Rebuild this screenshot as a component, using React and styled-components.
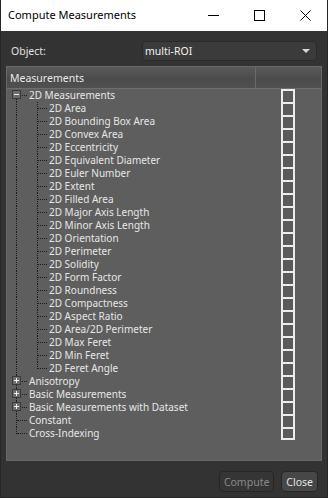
import React from 'react';
import styled, { createGlobalStyle } from 'styled-components';

const GlobalStyle = createGlobalStyle`
    html, body { margin: 0; padding: 0; background: #323232; }
    body { font-family: "Noto Sans", "Open Sans", sans-serif; }
`

const Window = styled.div`
    width: 328px; height: 498px;
    box-sizing: border-box;
    display: flex; flex-direction: column;
    background: #333333;
    border: 1px solid #262626;
    border-top: none;
    overflow: hidden;
`
const TitleBar = styled.div`
    height: 31px;
    flex: none;
    display: flex; align-items: center;
    background: #fff;
    margin: 0 -1px;
    padding-left: 8px;
`
const Title = styled.div`
    flex: 1;
    font-size: 11px;
    color: #000;
    padding-bottom: 2px;
`
const CaptionBtn = styled.div`
    width: 46px; height: 31px;
    display: flex; align-items: center; justify-content: center;
`
const Body = styled.div`
    flex: 1;
    display: flex; flex-direction: column;
    padding: 10px 5px 5px 5px;
`
const FieldRow = styled.div`
    display: flex; align-items: center;
    height: 20px;
    padding-left: 5px;
`
const Label = styled.div`
    width: 131px;
    font-size: 10.5px;
    color: #e0e0e0;
`
const Combo = styled.div`
    flex: 1;
    margin-right: 5px;
    height: 20px;
    box-sizing: border-box;
    display: flex; align-items: center; justify-content: space-between;
    padding: 0 6px 0 2px;
    background: #3b3b3b;
    border: 1px solid #2a2a2a;
    border-radius: 4px;
    font-size: 10.5px;
    color: #f0f0f0;
`
const Arrow = styled.div`
    width: 0; height: 0;
    border-left: 4px solid transparent;
    border-right: 4px solid transparent;
    border-top: 4px solid #d8d8d8;
`
const Panel = styled.div`
    margin-top: 5px;
    height: 395px;
    box-sizing: border-box;
    background: #5e5e5e;
    border: 1px solid #686868;
    display: flex; flex-direction: column;
`
const Header = styled.div`
    height: 22px;
    box-sizing: border-box;
    flex: none;
    display: grid;
    grid-template-columns: 249px 1fr;
    border-bottom: 1px solid #6e6e6e;
    background: linear-gradient(#5a5a5a, #4b4b4b 55%, #505050);
`
const HeaderCell = styled.div`
    display: flex; align-items: center;
    padding-left: 3px;
    font-size: 10.5px;
    color: #eaeaea;
    border-right: ${p => (p.$last ? 'none' : '1px solid #6a6a6a')};
`
const Rows = styled.div`
    display: flex; flex-direction: column;
`
const Row = styled.div`
    height: 13px;
    display: grid;
    grid-template-columns: 249px 1fr;
`
const TreeCell = styled.div`
    display: flex; align-items: center;
    height: 13px;
    white-space: nowrap;
`
const Guide = styled.div`
    position: relative;
    width: 20px; height: 13px;
    flex: none;
    &::before {
        content: '';
        display: ${p => (p.$vert === 'none' ? 'none' : 'block')};
        position: absolute;
        left: ${p => p.$x}px;
        top: ${p => (p.$vert === 'bottom' ? 6 : 0)}px;
        height: ${p => (p.$vert === 'full' ? 13 : 7)}px;
        border-left: 1px dotted #1c1c1c;
    }
    &::after {
        content: '';
        display: ${p => (p.$horiz ? 'block' : 'none')};
        position: absolute;
        left: ${p => p.$x + 1}px;
        right: 0;
        top: 6px;
        border-top: 1px dotted #1c1c1c;
    }
`
const Expander = styled.div`
    position: absolute;
    left: ${p => p.$x - 4}px; top: 1px;
    width: 9px; height: 9px;
    box-sizing: border-box;
    z-index: 1;
    background: #6c6c6c;
    border: 1px solid #3a3a3a;
    &::before {
        content: '';
        position: absolute;
        left: 1px; top: 3px;
        width: 5px; height: 1px;
        background: #f0f0f0;
    }
    &::after {
        content: '';
        display: ${p => (p.$open ? 'none' : 'block')};
        position: absolute;
        left: 3px; top: 1px;
        width: 1px; height: 5px;
        background: #f0f0f0;
    }
`
const ItemText = styled.span`
    padding-left: 2px;
    font-size: 10px;
    line-height: 13px;
    color: #e6e6e6;
`
const CheckCell = styled.div`
    display: flex; justify-content: center;
    padding-right: 2px;
`
const Check = styled.div`
    width: 14px; height: 13px;
    box-sizing: border-box;
    border: 2px solid #ececec;
    border-bottom: ${p => (p.$last ? '2px solid #ececec' : 'none')};
    background: #5a5a5a;
`
const Footer = styled.div`
    display: flex; justify-content: flex-end; gap: 7px;
    padding: 10px 4px 0 0;
`
const Button = styled.div`
    height: 21px;
    box-sizing: border-box;
    padding: 0 4px;
    display: flex; align-items: center;
    font-size: 10.5px;
    border-radius: 4px;
    border: 1px solid #262626;
    background: ${p => (p.$disabled ? '#353535' : '#474747')};
    color: ${p => (p.$disabled ? '#8a8a8a' : '#e4e4e4')};
`

const children2D = [
    '2D Area', '2D Bounding Box Area', '2D Convex Area', '2D Eccentricity',
    '2D Equivalent Diameter', '2D Euler Number', '2D Extent', '2D Filled Area',
    '2D Major Axis Length', '2D Minor Axis Length', '2D Orientation', '2D Perimeter',
    '2D Solidity', '2D Form Factor', '2D Roundness', '2D Compactness',
    '2D Aspect Ratio', '2D Area/2D Perimeter', '2D Max Feret', '2D Min Feret',
    '2D Feret Angle',
]

const roots = [
    { name: 'Anisotropy', expand: true },
    { name: 'Basic Measurements', expand: true },
    { name: 'Basic Measurements with Dataset', expand: true },
    { name: 'Constant' },
    { name: 'Cross-Indexing' },
]

const App = () => {
    const rows = []
    rows.push(
        <TreeCell key="r0">
            <Guide $x={9} $vert="bottom" $horiz><Expander $x={9} $open /></Guide>
            <ItemText>2D Measurements</ItemText>
        </TreeCell>
    )
    children2D.forEach((name, i) => {
        rows.push(
            <TreeCell key={name}>
                <Guide $x={9} $vert="full" />
                <Guide $x={10} $vert={i === children2D.length - 1 ? 'top' : 'full'} $horiz />
                <ItemText>{name}</ItemText>
            </TreeCell>
        )
    })
    roots.forEach((r, i) => {
        rows.push(
            <TreeCell key={r.name}>
                <Guide $x={9} $vert={i === roots.length - 1 ? 'top' : 'full'} $horiz>
                    {r.expand && <Expander $x={9} />}
                </Guide>
                <ItemText>{r.name}</ItemText>
            </TreeCell>
        )
    })

    return (
        <>
            <GlobalStyle />
            <Window>
                <TitleBar>
                    <Title>Compute Measurements</Title>
                    <CaptionBtn>
                        <svg width="11" height="11" viewBox="0 0 11 11"><path d="M0 5.5h11" stroke="#000" strokeWidth="1" /></svg>
                    </CaptionBtn>
                    <CaptionBtn>
                        <svg width="11" height="11" viewBox="0 0 11 11"><rect x="0.5" y="0.5" width="10" height="10" fill="none" stroke="#000" strokeWidth="1" /></svg>
                    </CaptionBtn>
                    <CaptionBtn>
                        <svg width="11" height="11" viewBox="0 0 11 11"><path d="M0.5 0.5L10.5 10.5M10.5 0.5L0.5 10.5" stroke="#000" strokeWidth="1" /></svg>
                    </CaptionBtn>
                </TitleBar>
                <Body>
                    <FieldRow>
                        <Label>Object:</Label>
                        <Combo>
                            <span>multi-ROI</span>
                            <Arrow />
                        </Combo>
                    </FieldRow>
                    <Panel>
                        <Header>
                            <HeaderCell>Measurements</HeaderCell>
                            <HeaderCell $last />
                        </Header>
                        <Rows>
                            {rows.map((cell, i) => (
                                <Row key={i}>
                                    {cell}
                                    <CheckCell><Check $last={i === rows.length - 1} /></CheckCell>
                                </Row>
                            ))}
                        </Rows>
                    </Panel>
                    <Footer>
                        <Button $disabled>Compute</Button>
                        <Button>Close</Button>
                    </Footer>
                </Body>
            </Window>
        </>
    )
}

export default App
